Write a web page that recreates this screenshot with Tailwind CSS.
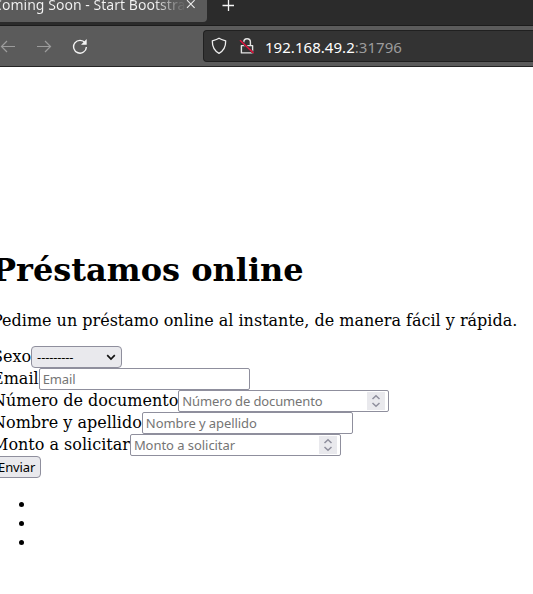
<!DOCTYPE html>
<html lang="es">
<head>
<meta charset="utf-8">
<title>Coming Soon - Start Bootstrap Theme</title>
<script src="https://cdn.jsdelivr.net/npm/@tailwindcss/browser@4"></script>
</head>
<body class="w-[533px] h-[594px] overflow-hidden bg-white text-black font-['DejaVu_Serif',serif] text-[16px] leading-[19px]">
<header class="font-['Noto_Sans',sans-serif]">
  <div class="h-[26px] bg-[#2b2b2b] border-b border-[#1c1c1c] flex items-start">
    <div class="h-[22px] w-[207px] bg-[#5b5b5b] rounded-br-[4px] flex overflow-hidden shrink-0">
      <div class="w-[186px] overflow-hidden shrink-0 bg-linear-to-r from-[#f4f4f4] from-83% to-[#5b5b5b] to-100% bg-clip-text text-transparent">
        <div class="-ml-[7px] -mt-[5px] whitespace-nowrap text-[14px] leading-[20px] tracking-[0.04px]">Coming Soon - Start Bootstrap</div>
      </div>
      <svg class="w-[10px] h-[10px] mt-[-1px]" viewBox="0 0 10 10" fill="none" stroke="#eee" stroke-width="1.1"><path d="M1 1.2 8.6 8.8M8.6 1.2 1 8.8"/></svg>
    </div>
    <svg class="w-[12px] h-[12px] ml-[15px] mt-[-1px]" viewBox="0 0 12 12" fill="none" stroke="#f4f4f4" stroke-width="1.300"><path d="M6.500 0v12M.5 6.500h12"/></svg>
  </div>
  <div class="h-[41px] bg-[#5b5b5b] border-b border-[#242424] flex items-center">
    <svg class="w-[16px] h-[16px]" viewBox="0 0 16 16" fill="none" stroke="#9c9c9c" stroke-width="1.200"><path d="M15 8.500H1.500M7 3 1.500 8.500 7 14"/></svg>
    <svg class="w-[16px] h-[16px] ml-[20px]" viewBox="0 0 16 16" fill="none" stroke="#9c9c9c" stroke-width="1.200"><path d="M1 8.500h13.500M9 3 14.500 8.500 9 14"/></svg>
    <svg class="w-[16px] h-[16px] ml-[20px]" viewBox="0 0 16 16" fill="none"><path d="M13.200 5A6.400 6.400 0 1 0 14.400 9" stroke="#f4f4f4" stroke-width="1.400"/><path d="M14.700 1v5.700H9z" fill="#f4f4f4"/></svg>
    <div class="ml-[115px] flex-1 h-[32px] bg-[#333] border border-r-0 border-[#202020] rounded-l-[4px] flex items-center">
      <svg class="w-[16px] h-[18px] ml-[7px] shrink-0" viewBox="0 0 16 18" fill="none" stroke="#eee" stroke-width="1.300" stroke-linejoin="round"><path d="M8 1.200C6.200 2.400 3.800 3.100 1.300 3.800 1.200 9.400 2.800 13.600 8 16.300 13.200 13.600 14.800 9.400 14.700 3.800 12.200 3.100 9.800 2.400 8 1.200Z"/></svg>
      <svg class="w-[16px] h-[18px] ml-[12px] shrink-0" viewBox="0 0 16 18" fill="none" stroke="#e4e4e4" stroke-width="1.400"><path d="M4.800 5.600V5a3.300 3.300 0 0 1 6.600 0v3.500M2.400 8.600h11.200v7.300H2.400z" stroke-linejoin="round"/><path d="M1 3.200 14.500 16" stroke="#333" stroke-width="2.400"/><path d="M1 3.200 14.500 16" stroke="#e6103c" stroke-width="1.500"/></svg>
      <div class="ml-[10px] pt-[2px] text-[15px] leading-[20px] tracking-[0.04px] text-white whitespace-nowrap">192.168.49.2<span class="text-[#9c9c9c]">:31796</span></div>
    </div>
  </div>
</header>
<main class="pt-[184px] -ml-[8px]">
  <h1 class="text-[32px] leading-[38px] font-bold whitespace-nowrap">Préstamos online</h1>
  <p class="mt-[22px] whitespace-nowrap">Pedime un préstamo online al instante, de manera fácil y rápida.</p>
  <form class="mt-[16px] whitespace-nowrap">
    <div class="flex h-[22px]"><label class="pt-[1px]">Sexo</label>
      <div class="w-[91px] h-[22px] bg-[#e9e9ed] border border-[#8f8f9d] rounded-[4px] flex items-center pl-[5px] pr-[4px] font-['Open_Sans',sans-serif] text-[13px] justify-between"><span class="tracking-[-0.15px]">---------</span><svg class="w-[12px] h-[10px]" viewBox="0 0 12 10" fill="none" stroke="#111" stroke-width="1.700"><path d="M2.200 3.200 6 7l3.800-3.800"/></svg></div></div>
    <div class="flex h-[22px]"><label class="pt-[1px]">Email</label>
      <div class="w-[211px] h-[22px] border border-[#8f8f9d] rounded-[2px] pl-[3px] font-['Noto_Sans',sans-serif] text-[13px] leading-[21px] tracking-[-0.1px] text-[#757575]">Email</div></div>
    <div class="flex h-[22px]"><label class="pt-[1px]">Número de documento</label>
      <div class="w-[211px] h-[22px] border border-[#8f8f9d] rounded-[2px] pl-[3px] pr-[3px] flex items-center justify-between font-['Noto_Sans',sans-serif] text-[13px] tracking-[-0.13px] text-[#757575]"><span>Número de documento</span><svg class="w-[18px] h-[18px] bg-[#e9e9ed]" viewBox="0 0 18 18" fill="none" stroke="#8f8f9d" stroke-width="1.500"><path d="M5.500 7 9 3.700 12.500 7M5.500 11 9 14.300 12.500 11"/></svg></div></div>
    <div class="flex h-[22px]"><label class="pt-[1px]">Nombre y apellido</label>
      <div class="w-[211px] h-[22px] border border-[#8f8f9d] rounded-[2px] pl-[3px] font-['Noto_Sans',sans-serif] text-[13px] leading-[21px] tracking-[-0.08px] text-[#757575]">Nombre y apellido</div></div>
    <div class="flex h-[22px]"><label class="pt-[1px]">Monto a solicitar</label>
      <div class="w-[211px] h-[22px] border border-[#8f8f9d] rounded-[2px] pl-[3px] pr-[3px] flex items-center justify-between font-['Noto_Sans',sans-serif] text-[13px] tracking-[-0.05px] text-[#757575]"><span>Monto a solicitar</span><svg class="w-[18px] h-[18px] bg-[#e9e9ed]" viewBox="0 0 18 18" fill="none" stroke="#8f8f9d" stroke-width="1.500"><path d="M5.500 7 9 3.700 12.500 7M5.500 11 9 14.300 12.500 11"/></svg></div></div>
    <button type="button" class="block w-[49px] h-[22px] bg-[#e9e9ed] border border-[#8f8f9d] rounded-[4px] font-['Noto_Sans',sans-serif] text-[13px] leading-[20px] tracking-[-0.1px] text-left pl-[5px]">Enviar</button>
  </form>
  <ul class="list-disc pl-[44px] mt-[17px]"><li class="h-[19px]"></li><li class="h-[19px]"></li><li class="h-[19px]"></li></ul>
</main>
</body>
</html>
